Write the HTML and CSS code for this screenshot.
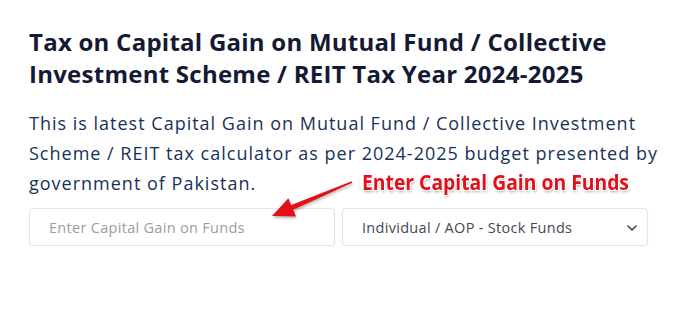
FILE: index.html
```html
<!DOCTYPE html>
<html lang="en">
<head>
<meta charset="utf-8">
<title>Tax on Capital Gain on Mutual Fund</title>
<link rel="stylesheet" href="styles.css">
</head>
<body>
<main class="calc">
  <h1 class="calc-title">Tax on Capital Gain on Mutual Fund / Collective Investment Scheme / REIT Tax Year 2024-2025</h1>
  <p class="calc-intro">This is latest Capital Gain on Mutual Fund / Collective Investment Scheme / REIT tax calculator as per 2024-2025 budget presented by government of Pakistan.</p>
  <div class="calc-form">
    <input class="field field-input" type="text" placeholder="Enter Capital Gain on Funds">
    <div class="select-wrap">
      <select class="field field-select">
        <option>Individual / AOP - Stock Funds</option>
      </select>
      <svg class="chev" width="10" height="6" viewBox="0 0 10 6"><path d="M1 1l4 4 4-4" fill="none" stroke="#333" stroke-width="1.4" stroke-linecap="round" stroke-linejoin="round"/></svg>
    </div>
    <div class="annot">Enter Capital Gain on Funds</div>
    <svg class="arrow" width="100" height="50" viewBox="262 172 100 50">
      <polygon points="272,215 288.3,197.2 291.2,204.1 351.7,180.3 352.3,181.7 293.2,208.7 296,215.6" fill="#e3101a"/>
    </svg>
  </div>
</main>
</body>
</html>
```
FILE: styles.css
```css
* { box-sizing: border-box; }
html, body { margin: 0; background: #fff; }
body { font-family: "Open Sans", "DejaVu Sans", sans-serif; }
.calc { padding: 26px 29px 0 29px; width: 687px; }
.calc-title {
  margin: 0;
  font-size: 24px;
  line-height: 32px;
  font-weight: 700;
  color: #141a33;
  letter-spacing: 0.25px;
}
.calc-intro {
  margin: 18px 0 0 0;
  width: 645px;
  font-size: 18px;
  line-height: 30px;
  font-weight: 400;
  color: #17325a;
  letter-spacing: 1px;
}
.calc-form {
  position: relative;
  display: grid;
  grid-template-columns: minmax(0, 1fr) minmax(0, 1fr);
  column-gap: 7px;
  margin-top: 10px;
  width: 619px;
}
.field {
  width: 100%;
  height: 38px;
  border: 1px solid #e2e4e8;
  border-radius: 4px;
  box-shadow: 0 1px 2px rgba(0,0,0,0.06);
  background: #fff;
  font-family: "Open Sans", sans-serif;
  font-size: 14.5px;
  letter-spacing: 0.3px;
  padding: 0 19px;
  color: #45484f;
  outline: none;
  margin: 0;
}
.field::placeholder { color: #9a9da3; }
.select-wrap { position: relative; }
.field-select {
  appearance: none;
  -webkit-appearance: none;
  display: block;
}
.chev { position: absolute; right: 11px; top: 17px; }
.annot {
  position: absolute;
  left: 333px;
  top: -40px;
  font-family: "Open Sans", sans-serif;
  font-weight: 700;
  font-size: 21px;
  color: #e3101a;
  white-space: nowrap;
  transform: scaleX(0.92);
  transform-origin: left center;
  text-shadow: -1px -1px 0 #fff, 1px -1px 0 #fff, -1px 1px 0 #fff, 1px 1px 0 #fff, 1px 2px 3px rgba(0,0,0,0.35);
}
.arrow {
  position: absolute;
  left: 233px;
  top: -35px;
  filter: drop-shadow(1px 2px 1px rgba(0,0,0,0.25));
}
```
